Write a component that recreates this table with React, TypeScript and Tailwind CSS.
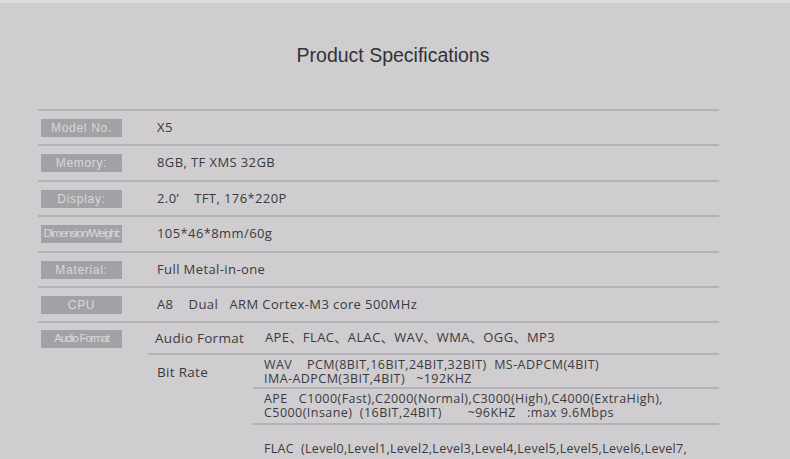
import React from "react";

const rows = [
  { label: "Model No.", value: "X5", h: "h-[35px]" },
  { label: "Memory:", value: "8GB, TF XMS 32GB", h: "h-[36px]" },
  { label: "Display:", value: "2.0\u2019\u00a0\u00a0\u00a0\u00a0TFT, 176*220P", h: "h-[35px]" },
  { label: "Dimension/Weight:", value: "105*46*8mm/60g", h: "h-[36px]", tight: true },
  { label: "Material:", value: "Full Metal-in-one", h: "h-[35px]" },
  { label: "CPU", value: "A8\u00a0\u00a0\u00a0\u00a0Dual\u00a0\u00a0\u00a0ARM Cortex-M3 core 500MHz", h: "h-[35px]" },
];

const valueFont = { fontFamily: '"Open Sans", "Noto Sans CJK SC", sans-serif' };

const Label = ({ text, tight }: { text: string; tight?: boolean }) => (
  <div
    className={
      "ml-[3px] w-[81px] h-[18px] bg-[#a2a1a5] text-[#d9d8db] flex items-center justify-center whitespace-nowrap " +
      (tight ? "text-[11.5px] tracking-[-1.2px]" : "text-[12px] tracking-[0.7px]")
    }
    style={{ fontFamily: '"Liberation Sans", Arial, sans-serif' }}
  >
    {text}
  </div>
);

export default function App() {
  return (
    <div className="w-[790px] h-[459px] overflow-hidden bg-[#cfcdd0]">
      <div className="h-[3px] bg-[#dedddf]" />

      {/* Titulo */}
      <h1
        className="pt-[38px] pr-[4px] text-center text-[19.5px] leading-[28px] text-[#333235]"
        style={{ fontFamily: '"Liberation Sans", Arial, sans-serif' }}
      >
        Product Specifications
      </h1>

      <div className="mt-[40px] ml-[38px] w-[681px] text-[#3b3a3d]" style={valueFont}>
        {rows.map((r) => (
          <div key={r.label} className={"border-t-2 border-[#b3b2b6] flex items-center " + r.h}>
            <div className="w-[119px] shrink-0">
              <Label text={r.label} tight={r.tight} />
            </div>
            <div className="text-[13px] tracking-[0.4px] whitespace-pre">{r.value}</div>
          </div>
        ))}

        {/* Audio Format */}
        <div className="border-t-2 border-[#b3b2b6] flex">
          <div className="w-[110px] shrink-0 pt-[7px]">
            <Label text="Audio Format" tight />
          </div>
          <div className="flex-1">
            <div className="h-[32px] flex items-center border-b-2 border-[#b3b2b6]">
              <div className="w-[117px] pl-[7px] text-[13.5px] tracking-[0.3px]">Audio Format</div>
              <div className="text-[13px] tracking-[0.4px]">APE、FLAC、ALAC、WAV、WMA、OGG、MP3</div>
            </div>
            <div className="flex">
              <div className="w-[105px] pl-[9px] pt-[7px] text-[13.5px] tracking-[0.3px] shrink-0">Bit Rate</div>
              <div className="flex-1 text-[12.5px] leading-[14px] tracking-[0.45px]">
                <div className="h-[34px] pl-[11px] pt-[3px] border-b-2 border-[#b3b2b6] whitespace-pre">
                  {"WAV    PCM(8BIT,16BIT,24BIT,32BIT)  MS-ADPCM(4BIT)\nIMA-ADPCM(3BIT,4BIT)   ~192KHZ"}
                </div>
                <div className="h-[36px] pl-[11px] pt-[3px] border-b-2 border-[#b3b2b6] whitespace-pre">
                  {"APE   C1000(Fast),C2000(Normal),C3000(High),C4000(ExtraHigh),\nC5000(Insane)  (16BIT,24BIT)       ~96KHZ   :max 9.6Mbps"}
                </div>
                <div className="pl-[11px] pt-[17px] whitespace-pre tracking-[0.3px]">
                  {"FLAC  (Level0,Level1,Level2,Level3,Level4,Level5,Level5,Level6,Level7,"}
                </div>
              </div>
            </div>
          </div>
        </div>
      </div>
    </div>
  );
}
